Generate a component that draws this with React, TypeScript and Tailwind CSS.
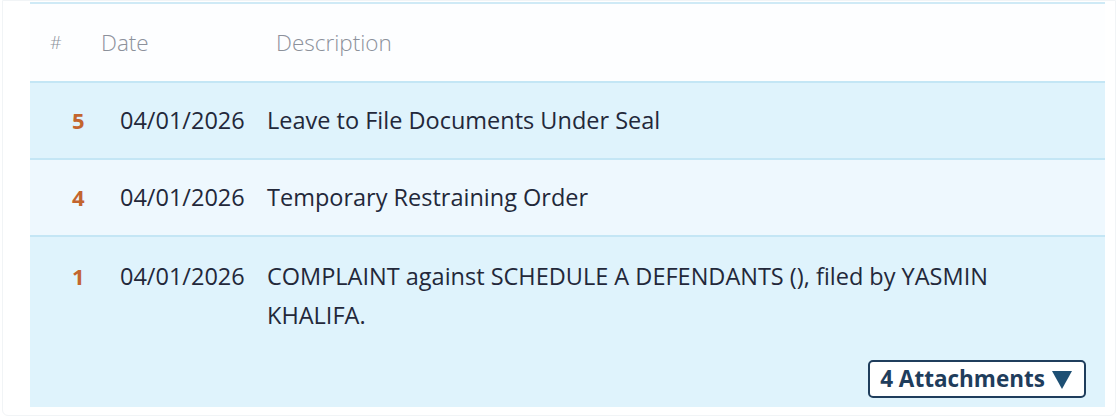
const rows = [
  { num: '5', date: '04/01/2026', desc: 'Leave to File Documents Under Seal', bg: 'bg-[#dff3fc]' },
  { num: '4', date: '04/01/2026', desc: 'Temporary Restraining Order', bg: 'bg-[#eef8fe]' },
  {
    num: '1',
    date: '04/01/2026',
    desc: 'COMPLAINT against SCHEDULE A DEFENDANTS (), filed by YASMIN KHALIFA.',
    bg: 'bg-[#dff3fc]',
    attachments: 4,
  },
];

export default function App() {
  return (
    <div className="w-[1118px] h-[418px] bg-white overflow-hidden" style={{ fontFamily: '"Open Sans", Lato, sans-serif' }}>
      <div className="mx-[2px] h-[416px] border border-[#f1f4f6] rounded-b-md pl-[27px] pr-[10px] pt-[1px]">
        <div className="border-t-2 border-[#cfeaf6]">
          {/* header */}
          <div className="flex items-center h-[77px] bg-[#fdfeff] text-[22.5px] font-light text-[#8c919b]">
            <div className="w-[71px] pl-[20px] text-[18px]">#</div>
            <div className="w-[175px]">Date</div>
            <div>Description</div>
          </div>
          {rows.map((r) => (
            <div
              key={r.num}
              className={`${r.bg} border-t-2 border-[#c4e6f5] pr-[19px] ${r.attachments ? 'pt-[20px] pb-[9px]' : 'py-[18px]'}`}
            >
              <div className="flex text-[23.5px] leading-[39px] text-[#23283a]">
                <div className="w-[90px] shrink-0 pl-[42px] font-bold text-[#c3652e] text-[22px]">{r.num}</div>
                <div className="w-[147px] shrink-0">{r.date}</div>
                <div className="flex-1 pr-[60px]">{r.desc}</div>
              </div>
              {r.attachments && (
                <div className="flex justify-end mt-[25px]">
                  <button className="h-[38px] pl-[10px] pr-[12px] bg-white border-2 border-[#1f3d5c] rounded-[5px] text-[22.5px] font-bold text-[#1f3d5c] flex items-center gap-[7px]">
                    {r.attachments} Attachments
                    <svg width="20" height="18" viewBox="0 0 20 18" className="mt-[2px]">
                      <polygon points="0,0 20,0 10,18" fill="#1d4f73" />
                    </svg>
                  </button>
                </div>
              )}
            </div>
          ))}
        </div>
      </div>
    </div>
  );
}
